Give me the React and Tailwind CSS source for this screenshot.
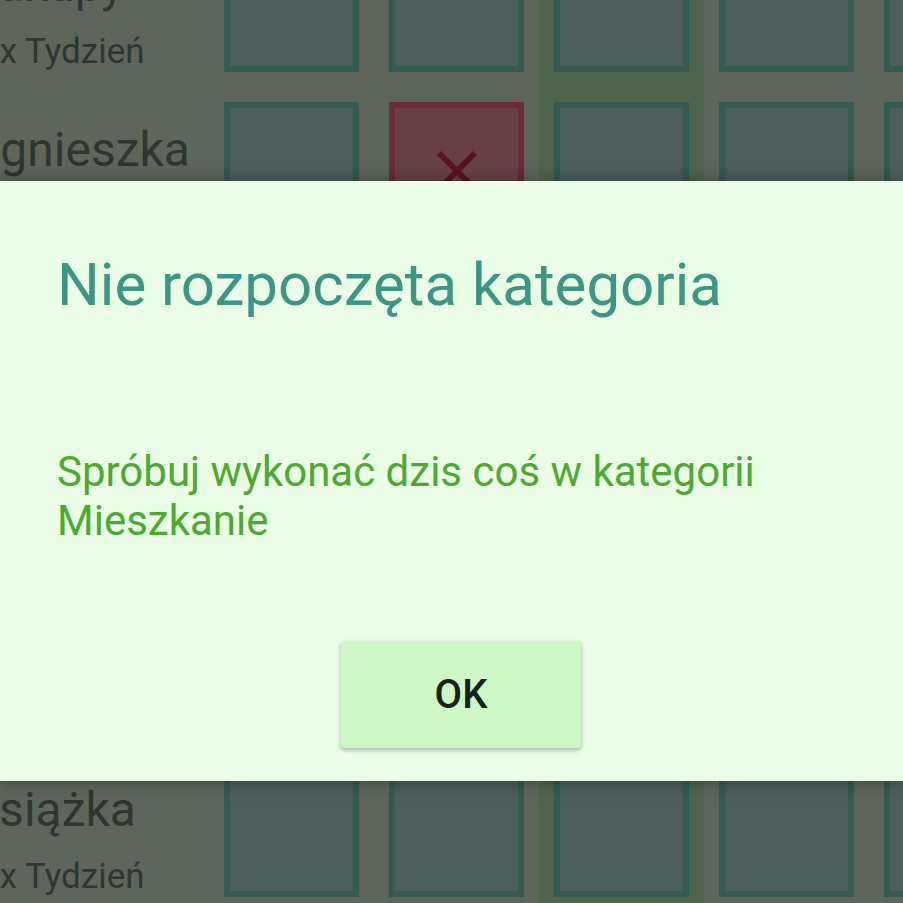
const rows = [
  { name: 'Zakupy', freq: '1x Tydzień' },
  { name: 'Agnieszka', freq: '1x Tydzień' },
  { name: 'Mieszkanie', freq: '2x Tydzień' },
  { name: 'Sport', freq: '3x Tydzień' },
  { name: 'Praca', freq: '1x Tydzień' },
  { name: 'Książka', freq: '1x Tydzień' },
];

const columns = [0, 1, 2, 3, 4];

function Cell({ failed }) {
  if (failed) {
    return (
      <div className="flex h-[135px] w-[135px] shrink-0 items-center justify-center border-[6px] border-[#6a2c37] bg-[#684148]">
        <svg width="46" height="46" viewBox="0 0 46 46" className="mt-[2px]">
          <path d="M5 5 L41 41 M41 5 L5 41" stroke="#5a1322" strokeWidth="6" />
        </svg>
      </div>
    );
  }
  return <div className="h-[135px] w-[135px] shrink-0 border-[6px] border-[#345a52] bg-[#4a5f5c]" />;
}

export default function App() {
  return (
    <div className="relative h-[903px] w-[903px] overflow-hidden bg-[#5e665c]" style={{ fontFamily: 'Roboto, "Noto Sans", sans-serif' }}>
      <div className="-mt-[63px] flex">
        <div className="flex w-[209px] shrink-0 flex-col text-[#303530]">
          {rows.map((row) => (
            <div key={row.name} className="h-[165px] shrink-0 overflow-visible">
              <p className="-ml-[31px] whitespace-nowrap pt-[20px] text-[48px] leading-[56px]">{row.name}</p>
              <p className="-ml-[20px] mt-[18px] whitespace-nowrap text-[35px] leading-[41px]">{row.freq}</p>
            </div>
          ))}
        </div>
        {columns.map((col) => (
          <div key={col} className={`flex w-[165px] shrink-0 flex-col gap-[30px] px-[15px] ${col === 2 ? 'bg-[#4f654b]' : ''}`}>
            {rows.map((row, i) => (
              <Cell key={row.name} failed={col === 1 && i === 1} />
            ))}
          </div>
        ))}
      </div>

      <div className="absolute left-0 top-[181px] flex h-[600px] w-full flex-col bg-[#ebfce7] pl-[57px] pr-[57px] shadow-[0_0_18px_rgba(0,0,0,0.35)]">
        <h1 className="mt-[68px] text-[60px] font-normal leading-[72px] text-[#3a9783]">Nie rozpoczęta kategoria</h1>
        <p className="mt-[126px] text-[42px] leading-[49px] text-[#4caa2f]">Spróbuj wykonać dzis coś w kategorii Mieszkanie</p>
        <button
          type="button"
          className="ml-[284px] mt-[96px] flex h-[107px] w-[240px] items-center justify-center rounded-[4px] bg-[#cdf7c5] text-[40px] font-medium text-[#1a201a] shadow-[0_2px_4px_rgba(0,0,0,0.3)]"
        >
          OK
        </button>
      </div>
    </div>
  );
}
